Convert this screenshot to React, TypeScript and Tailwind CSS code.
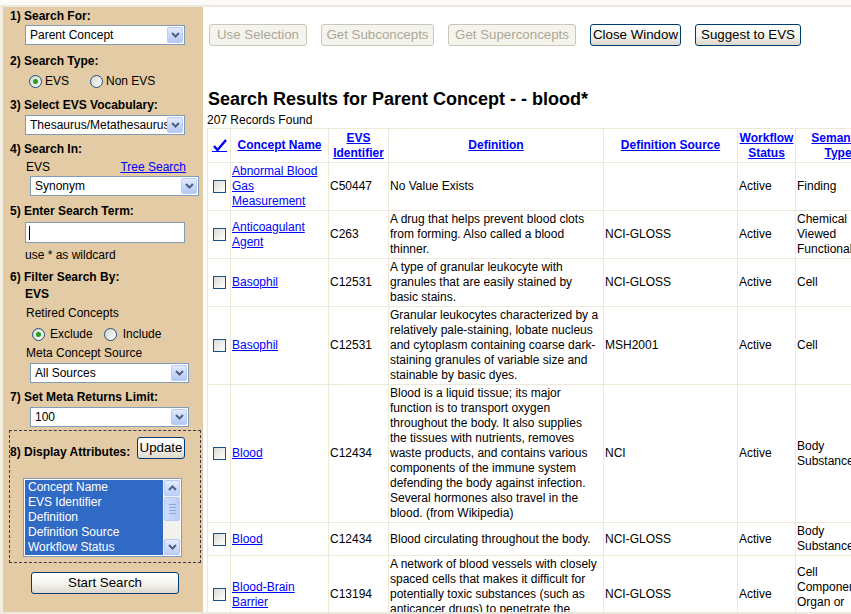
import React from "react";

function Chevron() {
  return (
    <svg width="9" height="6" viewBox="0 0 9 6">
      <path d="M1 1 L4.5 4.5 L8 1" fill="none" stroke="#4d6185" strokeWidth="2" />
    </svg>
  );
}

function XPSelect({ value, className }: { value: string; className: string }) {
  return (
    <div className={"flex h-[20px] items-center border border-[#7f9db9] bg-white " + className}>
      <span className="min-w-0 flex-1 overflow-hidden whitespace-nowrap pl-[4px] text-[12px] leading-[15px]">
        {value}
      </span>
      <span className="mr-[1px] flex h-[16px] w-[16px] shrink-0 items-center justify-center rounded-[2px] border border-[#bacdf4] bg-linear-to-b from-[#e3ebfe] to-[#b4c8f6]">
        <Chevron />
      </span>
    </div>
  );
}

function Radio({ checked }: { checked?: boolean }) {
  return (
    <span className="flex h-[13px] w-[13px] shrink-0 items-center justify-center rounded-full border border-[#1c5180] bg-linear-to-br from-[#d6d6cf] to-white">
      {checked ? <span className="h-[5px] w-[5px] rounded-full bg-[#21a121]" /> : null}
    </span>
  );
}

function Checkbox() {
  return (
    <span className="inline-block h-[13px] w-[13px] border border-[#1c5180] bg-linear-to-br from-[#dcdcd5] to-white align-middle" />
  );
}

function XPButton({ label, className, disabled }: { label: string; className: string; disabled?: boolean }) {
  const look = disabled
    ? "border-[#c9c7ba] bg-[#f5f4ec] text-[#aca899]"
    : "border-[#003c74] bg-linear-to-b from-white via-[#f6f5f0] to-[#dcd8cc] text-black";
  return (
    <div
      className={
        "flex h-[22px] shrink-0 items-center justify-center rounded-[3px] border text-[13.3px] leading-none " +
        look +
        " " +
        className
      }
    >
      {label}
    </div>
  );
}

function Label({ text, className }: { text: string; className: string }) {
  return <div className={"text-[12px] font-bold leading-[15px] " + className}>{text}</div>;
}

function ScrollArrow({ up }: { up?: boolean }) {
  return (
    <div className="flex h-[16px] w-[16px] items-center justify-center rounded-[2px] border border-[#b7c9f2] bg-linear-to-b from-[#e4ecfe] to-[#bccdf7]">
      <svg width="9" height="6" viewBox="0 0 9 6">
        <path
          d={up ? "M1 5 L4.5 1.5 L8 5" : "M1 1 L4.5 4.5 L8 1"}
          fill="none"
          stroke="#4d6185"
          strokeWidth="2"
        />
      </svg>
    </div>
  );
}

function LeftPanel() {
  return (
    <div className="flex h-full w-[203px] shrink-0 flex-col border-l-[3px] border-[#f3ede2] bg-[#e3cca5]">
      <Label text="1) Search For:" className="ml-[7px] mt-[2px]" />
      <XPSelect value="Parent Concept" className="ml-[22px] mt-[1px] w-[160px]" />
      <Label text="2) Search Type:" className="ml-[7px] mt-[9px]" />
      <div className="ml-[26px] mt-[5px] flex h-[15px] items-center text-[12px] leading-[15px]">
        <Radio checked />
        <span className="ml-[3px]">EVS</span>
        <span className="ml-[21px]">
          <Radio />
        </span>
        <span className="ml-[3px]">Non EVS</span>
      </div>
      <Label text="3) Select EVS Vocabulary:" className="ml-[7px] mt-[9px]" />
      <XPSelect value="Thesaurus/Metathesaurus" className="ml-[22px] mt-[2px] w-[160px]" />
      <Label text="4) Search In:" className="ml-[7px] mt-[7px]" />
      <div className="ml-[23px] mt-[3px] flex w-[160px] justify-between text-[12px] leading-[15px]">
        <span>EVS</span>
        <span className="text-[#0000ff] underline">Tree Search</span>
      </div>
      <XPSelect value="Synonym" className="ml-[27px] mt-[1px] w-[169px]" />
      <Label text="5) Enter Search Term:" className="ml-[7px] mt-[8px]" />
      <div className="ml-[22px] mt-[3px] flex h-[21px] w-[160px] items-center border border-[#7f9db9] bg-white pl-[3px]">
        <span className="h-[14px] w-[1px] bg-black" />
      </div>
      <div className="ml-[22px] mt-[5px] text-[12px] leading-[15px]">use * as wildcard</div>
      <Label text="6) Filter Search By:" className="ml-[7px] mt-[7px]" />
      <Label text="EVS" className="ml-[22px] mt-[2px]" />
      <div className="ml-[23px] mt-[4px] text-[12px] leading-[15px]">Retired Concepts</div>
      <div className="ml-[29px] mt-[6px] flex h-[15px] items-center text-[12px] leading-[15px]">
        <Radio checked />
        <span className="ml-[5px]">Exclude</span>
        <span className="ml-[11px]">
          <Radio />
        </span>
        <span className="ml-[6px]">Include</span>
      </div>
      <div className="ml-[23px] mt-[4px] text-[12px] leading-[15px]">Meta Concept Source</div>
      <XPSelect value="All Sources" className="ml-[27px] mt-[2px] w-[159px]" />
      <Label text="7) Set Meta Returns Limit:" className="ml-[7px] mt-[7px]" />
      <XPSelect value="100" className="ml-[27px] mt-[2px] w-[159px]" />
      <div className="ml-[6px] mt-[3px] w-[192px] border border-dashed border-[#3a3a4a] pb-[5px]">
        <div className="flex items-start justify-between pr-[15px] pt-[6px]">
          <Label text="8) Display Attributes:" className="mt-[8px]" />
          <XPButton label="Update" className="h-[21px] w-[48px]" />
        </div>
        <div className="ml-[13px] mt-[18px] flex h-[79px] w-[159px] border border-[#7f9db9] bg-white p-[1px]">
          <div className="min-w-0 flex-1 overflow-hidden bg-[#316ac5] pl-[3px] text-[12px] leading-[15px] text-white">
            <div>Concept Name</div>
            <div>EVS Identifier</div>
            <div>Definition</div>
            <div>Definition Source</div>
            <div>Workflow Status</div>
          </div>
          <div className="flex w-[17px] flex-col justify-between bg-[#f3f1ec] pl-[1px]">
            <ScrollArrow up />
            <div className="-mt-[18px] flex h-[24px] w-[16px] flex-col items-center justify-center gap-[2px] rounded-[2px] border border-[#b7c9f2] bg-linear-to-r from-[#cfdcfb] to-[#bccdf7]">
              <span className="h-[1px] w-[7px] bg-[#8ea6e0]" />
              <span className="h-[1px] w-[7px] bg-[#8ea6e0]" />
              <span className="h-[1px] w-[7px] bg-[#8ea6e0]" />
              <span className="h-[1px] w-[7px] bg-[#8ea6e0]" />
            </div>
            <ScrollArrow />
          </div>
        </div>
      </div>
      <XPButton label="Start Search" className="ml-[28px] mt-[9px] w-[148px]" />
    </div>
  );
}

type Row = { name: string; id: string; def: string[]; src: string; status: string; sem: string[] };

const rows: Row[] = [
  { name: "Abnormal Blood Gas Measurement", id: "C50447", def: ["No Value Exists"], src: "", status: "Active", sem: ["Finding"] },
  {
    name: "Anticoagulant Agent",
    id: "C263",
    def: ["A drug that helps prevent blood clots", "from forming. Also called a blood", "thinner."],
    src: "NCI-GLOSS",
    status: "Active",
    sem: ["Chemical Viewed Functionally"],
  },
  {
    name: "Basophil",
    id: "C12531",
    def: ["A type of granular leukocyte with", "granules that are easily stained by", "basic stains."],
    src: "NCI-GLOSS",
    status: "Active",
    sem: ["Cell"],
  },
  {
    name: "Basophil",
    id: "C12531",
    def: [
      "Granular leukocytes characterized by a",
      "relatively pale-staining, lobate nucleus",
      "and cytoplasm containing coarse dark-",
      "staining granules of variable size and",
      "stainable by basic dyes.",
    ],
    src: "MSH2001",
    status: "Active",
    sem: ["Cell"],
  },
  {
    name: "Blood",
    id: "C12434",
    def: [
      "Blood is a liquid tissue; its major",
      "function is to transport oxygen",
      "throughout the body. It also supplies",
      "the tissues with nutrients, removes",
      "waste products, and contains various",
      "components of the immune system",
      "defending the body against infection.",
      "Several hormones also travel in the",
      "blood. (from Wikipedia)",
    ],
    src: "NCI",
    status: "Active",
    sem: ["Body Substance"],
  },
  {
    name: "Blood",
    id: "C12434",
    def: ["Blood circulating throughout the body."],
    src: "NCI-GLOSS",
    status: "Active",
    sem: ["Body Substance"],
  },
  {
    name: "Blood-Brain Barrier",
    id: "C13194",
    def: [
      "A network of blood vessels with closely",
      "spaced cells that makes it difficult for",
      "potentially toxic substances (such as",
      "anticancer drugs) to penetrate the",
      "blood vessel walls and enter the brain.",
    ],
    src: "NCI-GLOSS",
    status: "Active",
    sem: ["Cell Component", "Organ or Tissue"],
  },
];

const th = "border border-[#ece9d8] px-[1px] text-center align-middle font-bold";
const td = "border border-[#ece9d8] p-[1px] align-middle";

function RightPanel() {
  return (
    <div className="h-full min-w-0 flex-1 overflow-hidden bg-white pl-[4px]">
      <div className="ml-[2px] mt-[17px] flex gap-[14px]">
        <XPButton label="Use Selection" className="w-[98px]" disabled />
        <XPButton label="Get Subconcepts" className="w-[113px]" disabled />
        <XPButton label="Get Superconcepts" className="w-[128px]" disabled />
        <XPButton label="Close Window" className="w-[91px]" />
        <XPButton label="Suggest to EVS" className="w-[106px]" />
      </div>
      <h1 className="ml-[1px] mt-[43px] whitespace-nowrap text-[18px] font-bold leading-[21px]">
        Search Results for Parent Concept - - blood*
      </h1>
      <div className="mt-[3px] text-[12px] leading-[15px]">207 Records Found</div>
      <table className="w-[673px] table-fixed border-collapse text-[12px] leading-[15px]">
        <colgroup>
          <col className="w-[23px]" />
          <col className="w-[98px]" />
          <col className="w-[60px]" />
          <col className="w-[215px]" />
          <col className="w-[134px]" />
          <col className="w-[58px]" />
          <col className="w-[85px]" />
        </colgroup>
        <thead>
          <tr className="h-[34px]">
            <th className={th}>
              <span className="inline-block border-b border-[#0000ff] align-middle">
                <svg width="15" height="12" viewBox="0 0 15 12" className="block">
                  <path d="M2 7 L5.5 11 L14 1" fill="none" stroke="#0000ff" strokeWidth="2.4" />
                </svg>
              </span>
            </th>
            <th className={th}>
              <span className="text-[#0000ff] underline">Concept Name</span>
            </th>
            <th className={th}>
              <span className="text-[#0000ff] underline">EVS Identifier</span>
            </th>
            <th className={th}>
              <span className="text-[#0000ff] underline">Definition</span>
            </th>
            <th className={th}>
              <span className="text-[#0000ff] underline">Definition Source</span>
            </th>
            <th className={th}>
              <span className="text-[#0000ff] underline">Workflow Status</span>
            </th>
            <th className={th}>
              <span className="text-[#0000ff] underline">Semantic Type</span>
            </th>
          </tr>
        </thead>
        <tbody>
          {rows.map((r, i) => (
            <tr key={i}>
              <td className={td + " text-center"}>
                <Checkbox />
              </td>
              <td className={td}>
                <span className="text-[#0000ff] underline">{r.name}</span>
              </td>
              <td className={td}>{r.id}</td>
              <td className={td}>
                {r.def.map((l, j) => (
                  <div key={j} className="whitespace-nowrap">
                    {l}
                  </div>
                ))}
              </td>
              <td className={td}>{r.src}</td>
              <td className={td}>{r.status}</td>
              <td className={td}>
                {r.sem.map((s, j) => (
                  <div key={j}>{s}</div>
                ))}
              </td>
            </tr>
          ))}
        </tbody>
      </table>
    </div>
  );
}

export default function App() {
  return (
    <div className="flex h-[614px] w-[851px] flex-col overflow-hidden bg-white font-['Liberation_Sans',Arial,sans-serif] text-black">
      <div className="h-[5px] shrink-0 bg-[#fcfbf8]" />
      <div className="h-[2px] shrink-0 bg-[#ebe8dd]" />
      <div className="flex min-h-0 flex-1">
        <LeftPanel />
        <RightPanel />
      </div>
      <div className="h-[2px] shrink-0 bg-[#ebe8dd]" />
    </div>
  );
}
